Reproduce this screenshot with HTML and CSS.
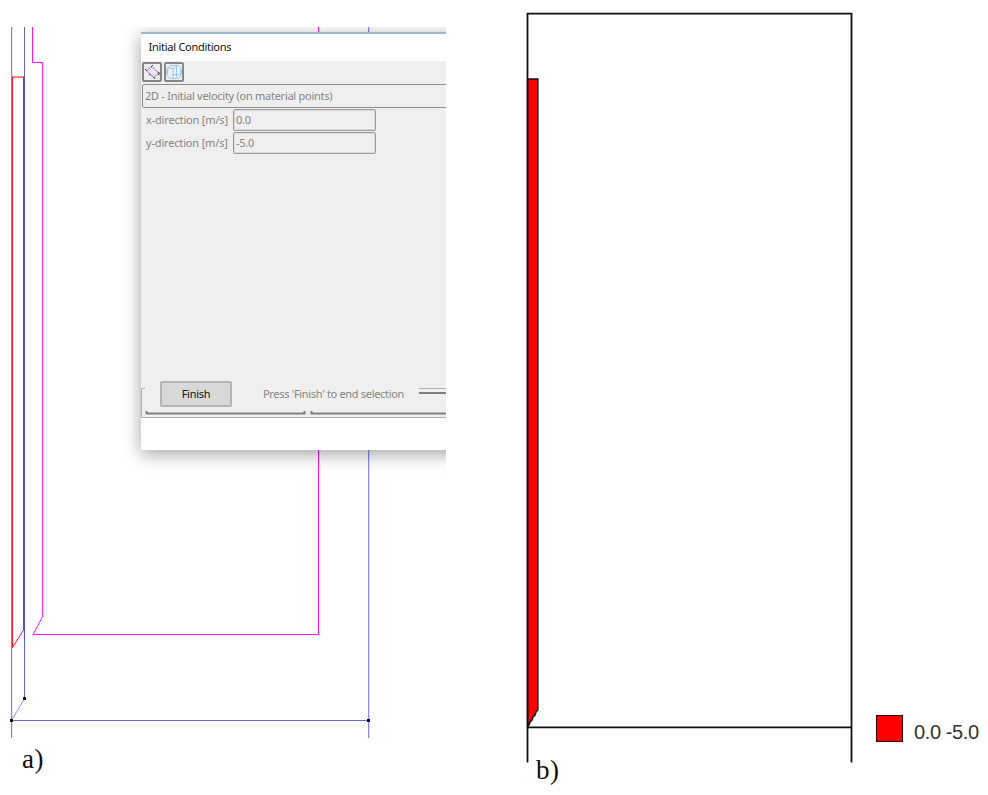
FILE: index.html
```html
<!DOCTYPE html>
<html lang="en">
<head>
<meta charset="utf-8">
<title>Initial Conditions</title>
<link rel="stylesheet" href="styles.css">
</head>
<body>
<main class="figure">
  <section class="panel panel-a">
    <div class="viewport">
      <svg class="drawing" viewBox="0 27 446 711" width="446" height="711" fill="none">
        <g stroke="#6464dc">
          <path d="M11.600 27V738" stroke="#8080ea" stroke-width="1.200"/>
          <path d="M24.500 27V698"/>
          <path d="M24.500 698.500L11.500 720.500" stroke="#8c8cee"/>
          <path d="M12 720.500H369"/>
          <path d="M368.700 27V738" stroke="#8080ea" stroke-width="1.200"/>
        </g>
        <path d="M32.500 27V62.500H42.600V616.500L33 634.500H318.500V27" stroke="#ff14f5"/>
        <path d="M12 77H24" stroke="#ff8080" stroke-width="2"/>
        <path d="M12.500 77V647.500L23.500 630V77" stroke="#ff1428"/>
        <path d="M24.500 77V640" stroke="#5050dc"/>
        <g fill="#111">
          <rect x="23" y="697" width="3" height="3"/>
          <rect x="10" y="719" width="3" height="3"/>
          <rect x="367" y="719" width="3" height="3"/>
        </g>
      </svg>
      <div class="dialog">
        <header class="title"><span>Initial Conditions</span></header>
        <div class="body">
          <div class="toolbar">
            <span class="tool">
              <svg viewBox="0 0 20 20" width="20" height="20" fill="none">
                <path d="M4.500 8.500L9.500 4.500L16.500 11L12 15.500Z" stroke="#c89af0" stroke-width="1.300"/>
                <path d="M3 7L5 9M9 5L11 3M15.500 10L18 11.500L16 13M7 12L8.500 13.500M11.500 15L13 17" stroke="#444"/>
              </svg>
            </span>
            <span class="tool">
              <svg viewBox="0 0 20 20" width="20" height="20" fill="none" stroke="#79bff0">
                <path stroke-dasharray="1.500 .7" d="M7 3.500H14L16.500 5.500V14.500L14 16.500H6L3.500 14V6L7 3.500M3.500 6L9 6.500L12 3.500M9 6.500V16.500M12.500 4V16M9 12.500H16.500M2.500 8V12M17.500 8V12"/>
              </svg>
            </span>
          </div>
          <div class="select"><span>2D - Initial velocity (on material points)</span></div>
          <div class="row"><label>x-direction [m/s]</label><span class="input">0.0</span></div>
          <div class="row"><label>y-direction [m/s]</label><span class="input">-5.0</span></div>
          <div class="footer">
            <svg class="frame" viewBox="0 0 305 37" width="305" height="37" fill="none">
              <path d="M4 7.500H.5V36.500H305M278 7.500H305" stroke="#b0b0b0"/>
              <path d="M278 12H305" stroke="#808080" stroke-width="2"/>
              <path d="M5.500 30V32.500H163.500V30M170.500 30V32.500H305" stroke="#808080" stroke-width="2"/>
            </svg>
            <span class="finish"><span>Finish</span></span>
            <span class="hint">Press 'Finish' to end selection</span>
          </div>
        </div>
      </div>
    </div>
    <p class="caption caption-a">a)</p>
  </section>
  <section class="panel panel-b">
    <div class="plot">
      <svg viewBox="520 10 340 754" width="340" height="754" fill="none" stroke="#111" stroke-width="1.800">
        <path d="M527.500 762.500V13.600H851.500V762.500M527.500 727.300H851.500"/>
        <path d="M527.700 79H537.800V710L536 712L535 715L533 717L532 720L530 722L529 725L527.700 726Z" fill="#f00" stroke-width="1.600"/>
      </svg>
      <p class="caption caption-b">b)</p>
    </div>
    <div class="legend"><span class="swatch"></span><span class="value">0.0 -5.0</span></div>
  </section>
</main>
</body>
</html>
```

FILE: styles.css
```css
* { box-sizing: border-box; }
body { margin: 0; background: #fff; }
p { margin: 0; }

.figure {
  display: grid;
  grid-template-columns: 446px 1fr;
  width: 988px;
  height: 795px;
  overflow: hidden;
}

.panel-a { padding-top: 27px; }
.viewport { position: relative; height: 711px; overflow: hidden; }
.drawing { display: block; }

.dialog {
  position: absolute;
  left: 141px;
  top: 5px;
  width: 330px;
  height: 418px;
  background: #fff;
  border-top: 2px solid #9bb8d0;
  box-shadow: 0 4px 17px rgba(0, 0, 0, .36);
  font: 11px/14px "Noto Sans", "Open Sans", sans-serif;
  letter-spacing: -.27px;
  color: #858585;
}
.title { height: 27px; padding: 6px 0 0 7.5px; color: #111; }
.body {
  display: flex;
  flex-direction: column;
  height: 357px;
  padding-top: 1px;
  background: #efefef;
}
.toolbar { display: flex; gap: 2px; height: 22px; padding-left: 1px; }
.tool {
  width: 20px;
  height: 20px;
  border: 2px solid #858585;
  border-radius: 2px;
  background: #eee;
}
.tool svg { display: block; margin: -2px; }
.select {
  height: 24px;
  margin-left: 1px;
  padding: 4px 0 0 2px;
  border: 1px solid #8f8f8f;
  border-radius: 2px;
}
.row { display: flex; height: 23px; padding: 1px 0 0 5px; }
.row label { width: 87px; padding-top: 4px; white-space: nowrap; letter-spacing: -.17px; }
.input {
  width: 143px;
  height: 22px;
  padding: 3px 0 0 2px;
  border: 1px solid #9c9c9c;
  border-radius: 2px;
  box-shadow: inset 0 0 0 1px #dadada;
}
.footer {
  display: flex;
  position: relative;
  height: 37px;
  margin-top: auto;
}
.frame { position: absolute; left: 0; top: 0; }
.finish {
  width: 72px;
  height: 26px;
  margin-left: 19px;
  padding-top: 4px;
  border: 2px solid #b4b4b4;
  border-radius: 2px;
  background: #d8d8d8;
  color: #111;
  text-align: center;
}
.hint { margin: 6px 0 0 31px; white-space: nowrap; letter-spacing: -.31px; }

.caption { font: 27px/30px "Liberation Serif", serif; letter-spacing: .5px; color: #111; }
.caption-a { padding: 6px 0 0 22px; }
.caption-b { margin-top: -9px; padding-left: 16px; }

.panel-b { display: flex; padding-top: 10px; }
.plot { width: 340px; margin-left: 74px; }
.plot svg { display: block; }
.legend { display: flex; gap: 11px; margin: 705px 0 0 16px; }
.swatch { width: 27px; height: 27px; background: #f00; border: 1.5px solid #300; }
.value {
  padding-top: 5px;
  font: 20px/24px "Liberation Sans", sans-serif;
  letter-spacing: -.4px;
  color: #333;
  white-space: nowrap;
}
```
